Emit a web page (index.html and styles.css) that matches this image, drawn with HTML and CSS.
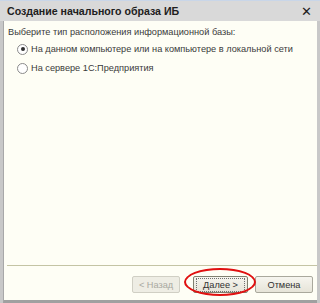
FILE: index.html
```html
<!DOCTYPE html>
<html lang="ru">
<head>
  <meta charset="UTF-8">
  <title>Создание начального образа ИБ</title>
  <link rel="stylesheet" href="styles.css">
</head>
<body>
  <div class="window">
    <div class="titlebar">
      <span class="title">Создание начального образа ИБ</span>
      <span class="close">&#x2715;</span>
    </div>
    <div class="content">
      <div class="prompt">Выберите тип расположения информационной базы:</div>
      <label class="option"><span class="radio checked"></span>На данном компьютере или на компьютере в локальной сети</label>
      <label class="option"><span class="radio"></span>На сервере 1С:Предприятия</label>
    </div>
    <div class="footer">
      <div class="separator"></div>
      <div class="buttons">
        <button class="btn back" disabled>&lt; Назад</button>
        <button class="btn next"><span class="focus">Далее &gt;</span></button>
        <button class="btn cancel">Отмена</button>
        <div class="marker"></div>
      </div>
    </div>
  </div>
</body>
</html>
```
FILE: styles.css
```css
body {
  margin: 0;
  font-family: "Liberation Sans", "DejaVu Sans", sans-serif;
  font-size: 9.2px;
  color: #3a3a3a;
}
.window {
  width: 320px;
  height: 303px;
  display: flex;
  flex-direction: column;
  background: #c8c8c8;
}
.titlebar {
  height: 21px;
  display: flex;
  align-items: center;
  justify-content: space-between;
  padding: 0 8px 0 7px;
  background: #d9d9d9;
  border-top: 1px solid #c9d6e8;
  box-sizing: border-box;
}
.title {
  font-weight: bold;
  font-size: 10.6px;
  color: #202020;
}
.close {
  font-size: 13px;
  color: #202020;
}
.content {
  flex: 1;
  margin: 0 3px 0 3px;
  background: #fefef5;
  border-left: 1px solid #a8a8a8;
  padding: 5px 0 0 4px;
  white-space: nowrap;
}
.prompt {
  height: 12px;
  line-height: 12px;
}
.option {
  display: flex;
  align-items: center;
  height: 18px;
  padding-left: 9px;
  margin-top: 2px;
}
.option + .option {
  margin-top: 1px;
}
.radio {
  width: 9px;
  height: 9px;
  border: 1px solid #8a8a8a;
  border-radius: 50%;
  background: #fff;
  margin-right: 3px;
  position: relative;
}
.radio.checked::after {
  content: "";
  position: absolute;
  left: 2.5px;
  top: 2.5px;
  width: 4px;
  height: 4px;
  border-radius: 50%;
  background: #303030;
}
.footer {
  margin: 0 3px;
  height: 35px;
  background: #fefef5;
  border-left: 1px solid #a8a8a8;
  border-bottom: 3px solid #a0a0a0;
  padding: 0 0 0 3px;
}
.separator {
  height: 1px;
  background: #c4c4a4;
}
.buttons {
  position: relative;
  display: flex;
  justify-content: flex-end;
  padding: 10px 4px 0 0;
}
.btn {
  height: 17px;
  font-family: inherit;
  font-size: 9.2px;
  color: #303030;
  background: linear-gradient(#f6f5ef, #e6e4d8);
  border: 1px solid #a9a89c;
  border-radius: 2px;
  padding: 0;
  margin-left: 7px;
}
.back {
  width: 48px;
  color: #a8a8a0;
  border-color: #d0cfc4;
  background: #eeede4;
}
.next {
  width: 55px;
  margin-left: 13px;
  border-color: #808070;
}
.next .focus {
  display: inline-block;
  border: 1px dotted #707070;
  padding: 1px 0;
  width: 47px;
}
.cancel {
  width: 58px;
}
.marker {
  position: absolute;
  left: 177px;
  top: 2px;
  width: 72px;
  height: 28px;
  border: 2px solid #e01010;
  border-radius: 50%;
  box-sizing: border-box;
}
```
